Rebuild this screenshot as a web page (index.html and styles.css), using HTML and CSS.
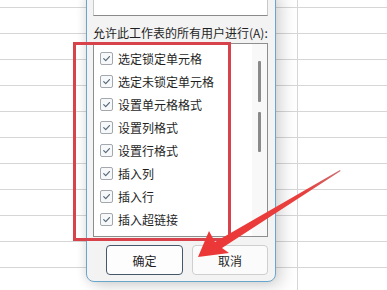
FILE: index.html
```html
<!DOCTYPE html>
<html>
<head>
<meta charset="utf-8">
<link rel="stylesheet" href="styles.css">
</head>
<body>
<div class="sheet">
  <div class="row first"><div class="cell a"></div><div class="cell b"></div></div>
  <div class="row"><div class="cell a"></div><div class="cell b"></div></div>
  <div class="row"><div class="cell a"></div><div class="cell b"></div></div>
  <div class="row"><div class="cell a"></div><div class="cell b"></div></div>
  <div class="row"><div class="cell a"></div><div class="cell b"></div></div>
  <div class="row"><div class="cell a"></div><div class="cell b"></div></div>
  <div class="row"><div class="cell a"></div><div class="cell b"></div></div>
  <div class="row"><div class="cell a"></div><div class="cell b"></div></div>
  <div class="row"><div class="cell a"></div><div class="cell b"></div></div>
  <div class="row"><div class="cell a"></div><div class="cell b"></div></div>
  <div class="row"><div class="cell a"></div><div class="cell b"></div></div>
  <div class="row"><div class="cell a"></div><div class="cell b"></div></div>
</div>

<div class="dialog">
  <div class="input"></div>
  <div class="label">允许此工作表的所有用户进行(A):</div>
  <div class="list">
    <div class="items">
      <div class="item"><span class="cb"><svg viewBox="0 0 13 13"><path d="M3.2 6.6 L5.6 9 L10 4.2"/></svg></span><span>选定锁定单元格</span></div>
      <div class="item"><span class="cb"><svg viewBox="0 0 13 13"><path d="M3.2 6.6 L5.6 9 L10 4.2"/></svg></span><span>选定未锁定单元格</span></div>
      <div class="item"><span class="cb"><svg viewBox="0 0 13 13"><path d="M3.2 6.6 L5.6 9 L10 4.2"/></svg></span><span>设置单元格格式</span></div>
      <div class="item"><span class="cb"><svg viewBox="0 0 13 13"><path d="M3.2 6.6 L5.6 9 L10 4.2"/></svg></span><span>设置列格式</span></div>
      <div class="item"><span class="cb"><svg viewBox="0 0 13 13"><path d="M3.2 6.6 L5.6 9 L10 4.2"/></svg></span><span>设置行格式</span></div>
      <div class="item"><span class="cb"><svg viewBox="0 0 13 13"><path d="M3.2 6.6 L5.6 9 L10 4.2"/></svg></span><span>插入列</span></div>
      <div class="item"><span class="cb"><svg viewBox="0 0 13 13"><path d="M3.2 6.6 L5.6 9 L10 4.2"/></svg></span><span>插入行</span></div>
      <div class="item"><span class="cb"><svg viewBox="0 0 13 13"><path d="M3.2 6.6 L5.6 9 L10 4.2"/></svg></span><span>插入超链接</span></div>
      <div class="item"><span class="cb empty"></span><span>删除列</span></div>
    </div>
    <div class="scroll">
      <div class="thumb t1"></div>
      <div class="thumb t2"></div>
    </div>
  </div>
  <div class="buttons">
    <button class="btn primary">确定</button>
    <button class="btn">取消</button>
  </div>
</div>

<div class="redbox"></div>

<svg class="arrow" width="387" height="290" viewBox="0 0 387 290">
  <defs>
    <linearGradient id="ag" x1="340" y1="170" x2="200" y2="256" gradientUnits="userSpaceOnUse">
      <stop offset="0" stop-color="#c97070"/>
      <stop offset="0.25" stop-color="#e8403e"/>
      <stop offset="1" stop-color="#ec3636"/>
    </linearGradient>
  </defs>
  <polygon fill="url(#ag)" points="340,170 340.6,171 222,248 229,253 198,257 209,231 215,242"/>
</svg>
</body>
</html>
```

FILE: styles.css
```css
html, body {
  margin: 0;
  padding: 0;
  background: #ffffff;
  overflow: hidden;
  width: 387px;
  height: 290px;
}

body {
  position: relative;
  font-family: "Noto Sans CJK SC", "Noto Sans", sans-serif;
}

.sheet {
  display: flex;
  flex-direction: column;
}

.row {
  display: flex;
  height: 25px;
  border-bottom: 1px solid #d6d6d6;
}

.row.first {
  height: 7px;
}

.cell.a {
  width: 297px;
  border-right: 1px solid #d6d6d6;
}

.cell.b {
  flex: 1;
}

.dialog {
  position: absolute;
  left: 86px;
  top: -10px;
  width: 175px;
  height: 290px;
  border: 1px solid #6aa6cc;
  border-radius: 8px;
  background: #f3f3f3;
  box-shadow: 6px 4px 16px rgba(0, 0, 0, 0.16), -2px 0 8px rgba(0, 0, 0, 0.08);
  padding: 0 7px 0 6px;
  box-sizing: content-box;
  display: flex;
  flex-direction: column;
}

.input {
  height: 24px;
  background: #ffffff;
  border: 1px solid #c8c8c8;
  border-bottom: 1px solid #8a8a8a;
  border-top: none;
}

.label {
  margin-top: 9px;
  font-size: 12px;
  line-height: 16px;
  color: #1f1f1f;
  white-space: nowrap;
}

.list {
  margin-top: 2px;
  height: 192px;
  border: 1px solid #8e8e8e;
  background: #ffffff;
  display: flex;
  overflow: hidden;
}

.items {
  flex: 1;
  padding-top: 3px;
  padding-left: 6px;
  display: flex;
  flex-direction: column;
}

.item {
  height: 23px;
  flex: none;
  display: flex;
  align-items: center;
  gap: 5px;
  font-size: 12px;
  color: #1f1f1f;
  white-space: nowrap;
}

.cb {
  width: 11px;
  height: 11px;
  border: 1px solid #a3a8ae;
  border-radius: 2px;
  background: #f6f8fa;
  display: flex;
  flex: none;
}

.cb svg {
  width: 11px;
  height: 11px;
}

.cb path {
  fill: none;
  stroke: #56687a;
  stroke-width: 1.4;
  stroke-linecap: round;
  stroke-linejoin: round;
}

.scroll {
  width: 15px;
  background: #f8f8f8;
  padding-top: 17px;
  display: flex;
  flex-direction: column;
  align-items: center;
  gap: 10px;
}

.thumb {
  width: 3px;
  background: #8a8a8a;
  border-radius: 1px;
}

.t1 { height: 41px; }
.t2 { height: 40px; }

.buttons {
  margin-top: 8px;
  display: flex;
  justify-content: flex-end;
  gap: 9px;
}

.btn {
  height: 30px;
  width: 76px;
  border: 1px solid #cfcfcf;
  border-radius: 4px;
  background: #fbfbfb;
  font-family: "Noto Sans CJK SC", "Noto Sans", sans-serif;
  font-size: 12px;
  color: #1f1f1f;
  padding: 0;
}

.btn.primary {
  width: 77px;
  border: 1px solid #44586a;
  background: #fdfdfd;
}

.redbox {
  position: absolute;
  left: 73px;
  top: 42px;
  width: 152px;
  height: 193px;
  border: 3px solid #d8434b;
}

.arrow {
  position: absolute;
  left: 0;
  top: 0;
}
```
